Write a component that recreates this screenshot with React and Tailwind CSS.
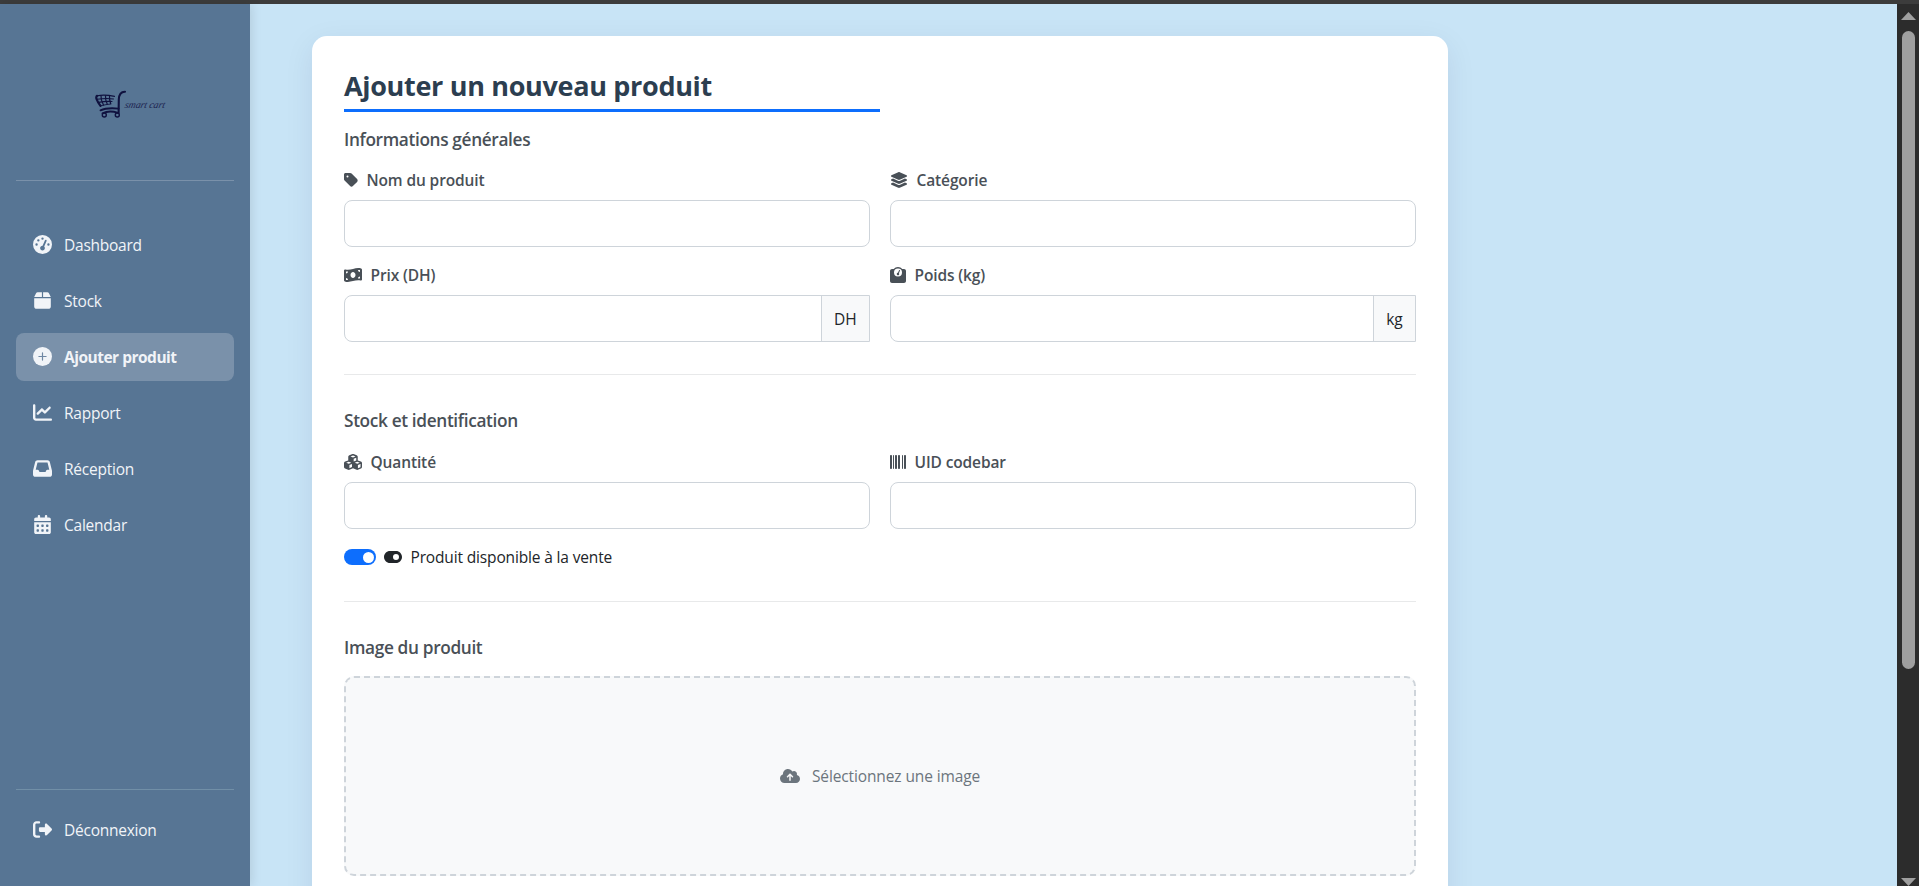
import {
  FaGaugeHigh, FaBox, FaChartLine, FaInbox, FaCalendarDays, FaRightFromBracket,
  FaTag, FaLayerGroup, FaMoneyBillWave, FaWeightScale, FaCubes, FaBarcode, FaToggleOn, FaCloudArrowUp,
} from "react-icons/fa6";

function CirclePlusThin({ className }) {
  return (
    <svg viewBox="0 0 19 19" className={className}>
      <circle cx="9.5" cy="9.5" r="9.5" fill="currentColor" />
      <path d="M9.5 5.9V13.1M5.9 9.5H13.1" stroke="#6f88a4" strokeWidth="1.2" strokeLinecap="round" />
    </svg>
  );
}

const NAV = [
  { label: "Dashboard", icon: FaGaugeHigh },
  { label: "Stock", icon: FaBox },
  { label: "Ajouter produit", icon: CirclePlusThin, active: true },
  { label: "Rapport", icon: FaChartLine },
  { label: "Réception", icon: FaInbox },
  { label: "Calendar", icon: FaCalendarDays },
];

function NavItem({ label, icon: Icon, active }) {
  return (
    <a
      className={
        "flex h-12 items-center rounded-lg pl-[17px] text-[15.5px] text-[#f1f4f8] " +
        (active ? "bg-[#7a91aa] font-bold tracking-[-0.5px]" : "tracking-[-0.24px]")
      }
    >
      <Icon className="-mt-0.5 mr-3 size-[19px] shrink-0" />
      <span className="pt-0.5">{label}</span>
    </a>
  );
}

function Logo() {
  return (
    <div className="flex h-[176px] items-start pl-[79px] pt-[86px]">
      <svg width="31" height="28" viewBox="0 0 31 28" fill="none" stroke="#10123f" strokeLinecap="round" strokeLinejoin="round">
        <path d="M30 1.7C25.5 1.6 24 4.6 23.8 9.500L23.600 23" strokeWidth="2.1" />
        <path d="M19.5 6.4C14 5.2 7 4.8 2 5.8" strokeWidth="1.1" />
        <path d="M2.200 5.800C0.200 7 1.500 10.500 5.500 15.800" strokeWidth="2.200" />
        <path d="M5.500 15.800C9 14.800 13 14.300 16 14" strokeWidth="0.900" />
        <path d="M2 9.200C7 8.600 13 8.200 18.500 9M3.500 12.400C8 11.500 12 11.200 17 11.500" strokeWidth="1.100" />
        <path d="M6 5.800C5.800 8.500 7 12.500 8.500 15M10.500 5.800C10.300 8.500 11 11.500 12.200 14M14.500 6.200C14.300 8.500 14.800 11 15.600 13.500" strokeWidth="1.200" />
        <path d="M5.500 20.400C11 17.700 17 17.900 23.600 18.600M7.500 23.300C12 21 18 21.200 23 22.800" strokeWidth="1.800" />
        <circle cx="9.300" cy="25" r="2" strokeWidth="1.400" />
        <circle cx="22.300" cy="25" r="2" strokeWidth="1.400" />
      </svg>
      <span className="-ml-px mt-[7px] inline-block origin-left -skew-x-12 whitespace-nowrap font-['Liberation_Serif',serif] text-[10px] italic leading-[16px] tracking-[-0.15px] text-[#1d2450]">
        smart cart
      </span>
    </div>
  );
}

function Field({ label, icon: Icon, suffix, iconClass }) {
  return (
    <div className="flex flex-1 flex-col">
      <label className="flex h-6 items-center text-[15.5px] font-[560] tracking-[-0.12px] text-[#495057]">
        <Icon className={"mr-[8.500px] shrink-0 " + iconClass} />
        <span className="pt-0.5">{label}</span>
      </label>
      <div
        className={
          "mt-2 flex h-[47px] overflow-hidden border border-[#ced4da] bg-white " +
          (suffix ? "rounded-l-lg" : "rounded-lg")
        }
      >
        <div className="flex-1" />
        {suffix && (
          <span className="flex items-center border-l border-[#ced4da] bg-[#f8f9fa] px-[12.5px] pt-0.5 text-[15.5px] tracking-[-0.1px] text-[#212529]">
            {suffix}
          </span>
        )}
      </div>
    </div>
  );
}

function SectionTitle({ children, className }) {
  return (
    <h2 className={"h-[26px] text-[17.25px] font-[560] leading-[26px] tracking-[-0.35px] text-[#495057] " + className}>
      {children}
    </h2>
  );
}

export default function App() {
  return (
    <div className="flex h-screen flex-col overflow-hidden bg-[#c8e4f6] font-['Open_Sans','Noto_Sans',sans-serif]">
      <div className="h-1 shrink-0 bg-[#3c3c3c]" />
      <div className="flex min-h-0 flex-1">
        <aside className="z-10 flex w-[250px] shrink-0 flex-col bg-[#577594] px-4 shadow-[2px_0_10px_rgba(0,0,0,0.1)]">
          <Logo />
          <div className="h-px bg-[#7a91aa]" />
          <nav className="mt-10 flex flex-col gap-2">
            {NAV.map((item) => (
              <NavItem key={item.label} {...item} />
            ))}
          </nav>
          <div className="mt-auto border-t border-[#718fa7] pb-8 pt-4">
            <NavItem label="Déconnexion" icon={FaRightFromBracket} />
          </div>
        </aside>

        <main className="min-w-0 flex-1 overflow-hidden pl-[62px] pt-8">
          <form className="flex h-[1000px] w-[1136px] flex-col rounded-[15px] bg-white px-8 pt-[33px] shadow-[0_8px_30px_rgba(0,30,80,0.08)]">
            <div className="h-[43px] w-[536px] border-b-[3px] border-[#0d6efd]">
              <h1 className="whitespace-nowrap text-[27px] font-bold leading-[34px] tracking-[-0.32px] text-[#2c3e50]">
                Ajouter un nouveau produit
              </h1>
            </div>

            <SectionTitle className="mt-[15px]">Informations générales</SectionTitle>
            <div className="mt-[15px] flex gap-5">
              <Field label="Nom du produit" icon={FaTag} iconClass="h-4 w-3.5" />
              <Field label="Catégorie" icon={FaLayerGroup} iconClass="h-4 w-[18px]" />
            </div>
            <div className="mt-4 flex gap-5">
              <Field label="Prix (DH)" icon={FaMoneyBillWave} iconClass="h-4 w-[18px]" suffix="DH" />
              <Field label="Poids (kg)" icon={FaWeightScale} iconClass="size-4" suffix="kg" />
            </div>
            <div className="mt-8 h-px bg-[#e8e9ea]" />

            <SectionTitle className="mt-[33px]">Stock et identification</SectionTitle>
            <div className="mt-4 flex gap-5">
              <Field label="Quantité" icon={FaCubes} iconClass="h-4 w-[18px]" />
              <Field label="UID codebar" icon={FaBarcode} iconClass="size-4" />
            </div>
            <div className="mt-4 flex h-6 items-center text-[15.5px] tracking-[-0.15px] text-[#212529]">
              <span className="flex h-4 w-8 items-center justify-end rounded-full bg-[#0d6efd] pr-[2.5px]">
                <span className="size-[11px] rounded-full bg-white" />
              </span>
              <FaToggleOn className="ml-2 mr-[8.5px] h-4 w-[18px]" />
              <span className="pt-0.5">Produit disponible à la vente</span>
            </div>
            <div className="mt-8 h-px bg-[#e8e9ea]" />

            <SectionTitle className="mt-[33px]">Image du produit</SectionTitle>
            <div className="mt-[15px] flex h-[200px] items-center justify-center rounded-[10px] border-2 border-dashed border-[#ced4da] bg-[#f8f9fa] text-[15.5px] tracking-[-0.12px] text-[#6c757d]">
              <FaCloudArrowUp className="mr-3 h-4 w-5" />
              <span className="pt-0.5">Sélectionnez une image</span>
            </div>
          </form>
        </main>

        <div className="flex w-[22px] shrink-0 flex-col items-center bg-[#2c2c2c] pl-px pt-2">
          <svg width="15" height="8" viewBox="0 0 15 8" className="shrink-0"><path d="M7.5 0L15 8H0Z" fill="#9f9f9f" /></svg>
          <div className="mt-[11px] h-[638px] w-[13px] shrink-0 rounded-full bg-[#9f9f9f]" />
          <svg width="15" height="8" viewBox="0 0 15 8" className="mt-auto shrink-0"><path d="M0 0H15L7.5 8Z" fill="#9f9f9f" /></svg>
        </div>
      </div>
    </div>
  );
}
